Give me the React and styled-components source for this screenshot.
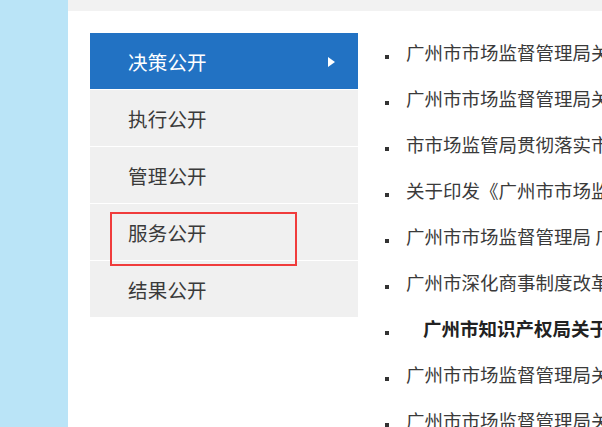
import React from "react";
import styled, { createGlobalStyle } from "styled-components";

const Global = createGlobalStyle`
  html, body { margin: 0; padding: 0; }
  body {
    width: 602px;
    height: 427px;
    overflow: hidden;
    background: #ffffff;
    font-family: "Microsoft YaHei", "Noto Sans CJK SC", "Noto Sans", sans-serif;
  }
`;

const Page = styled.div`
  display: flex;
  width: 602px;
  height: 427px;
  overflow: hidden;
`;

const SideStrip = styled.div`
  width: 68px;
  flex: none;
  background: #bae4f7;
`;

const Main = styled.div`
  flex: 1;
  display: flex;
  flex-direction: column;
  min-width: 0;
  background: #ffffff;
`;

const TopBar = styled.div`
  height: 11px;
  background: #f2f2f2;
  flex: none;
`;

const Content = styled.div`
  display: flex;
  align-items: flex-start;
  padding: 22px 0 0 22px;
  min-width: 0;
`;

const Menu = styled.nav`
  width: 268px;
  flex: none;
  display: flex;
  flex-direction: column;
  gap: 1px;
  background: #ffffff;
`;

const MenuItem = styled.div`
  position: relative;
  height: 56px;
  display: flex;
  align-items: center;
  justify-content: space-between;
  padding: 0 23px 0 38px;
  font-size: 19.5px;
  letter-spacing: 0.2px;
  color: ${(p) => (p.$active ? "#ffffff" : "#3a3a3a")};
  background: ${(p) => (p.$active ? "#2272c3" : "#f0f0f0")};
`;

const Arrow = styled.span`
  width: 0;
  height: 0;
  border-left: 7px solid #ffffff;
  border-top: 5px solid transparent;
  border-bottom: 5px solid transparent;
  margin-top: 1px;
`;

const Highlight = styled.div`
  position: absolute;
  left: 20px;
  top: 8px;
  width: 187px;
  height: 54px;
  box-sizing: border-box;
  border: 2px solid #f03c3c;
  pointer-events: none;
  z-index: 2;
`;

const List = styled.ul`
  list-style: none;
  margin: -4px 0 0 0;
  padding: 0 0 0 27px;
  flex: 1;
  min-width: 0;
  overflow: hidden;
`;

const Row = styled.li`
  height: 46px;
  display: flex;
  align-items: center;
  white-space: nowrap;
  font-size: 18.5px;
  color: #3a3a3a;
`;

const Bullet = styled.span`
  flex: none;
  width: 4px;
  height: 4px;
  background: #333333;
  margin: 10px 17px 0 0;
`;

const RowText = styled.span`
  font-weight: ${(p) => (p.$bold ? 700 : 400)};
  padding-left: ${(p) => (p.$indent ? "17px" : "0")};
  color: ${(p) => (p.$bold ? "#222222" : "#3a3a3a")};
`;

const menuItems = ["决策公开", "执行公开", "管理公开", "服务公开", "结果公开"];

const rows = [
  { text: "广州市市场监督管理局关于印发有关文件的通知" },
  { text: "广州市市场监督管理局关于进一步做好有关工作的通知" },
  { text: "市市场监管局贯彻落实市府有关工作部署" },
  { text: "关于印发《广州市市场监督管理局有关办法》的通知" },
  { text: "广州市市场监督管理局 广州市有关部门联合通知" },
  { text: "广州市深化商事制度改革实施方案" },
  { text: "广州市知识产权局关于印发有关办法的通知", bold: true, indent: true },
  { text: "广州市市场监督管理局关于公布有关事项的通告" },
  { text: "广州市市场监督管理局关于开展有关工作的通知" },
];

export default function App() {
  return (
    <>
      <Global />
      <Page>
        <SideStrip />
        <Main>
          <TopBar />
          <Content>
            <Menu>
              {menuItems.map((label, i) => (
                <MenuItem key={label} $active={i === 0}>
                  <span>{label}</span>
                  {i === 0 && <Arrow />}
                  {i === 3 && <Highlight />}
                </MenuItem>
              ))}
            </Menu>
            <List>
              {rows.map((r, i) => (
                <Row key={i}>
                  <Bullet />
                  <RowText $bold={r.bold} $indent={r.indent}>
                    {r.text}
                  </RowText>
                </Row>
              ))}
            </List>
          </Content>
        </Main>
      </Page>
    </>
  );
}
